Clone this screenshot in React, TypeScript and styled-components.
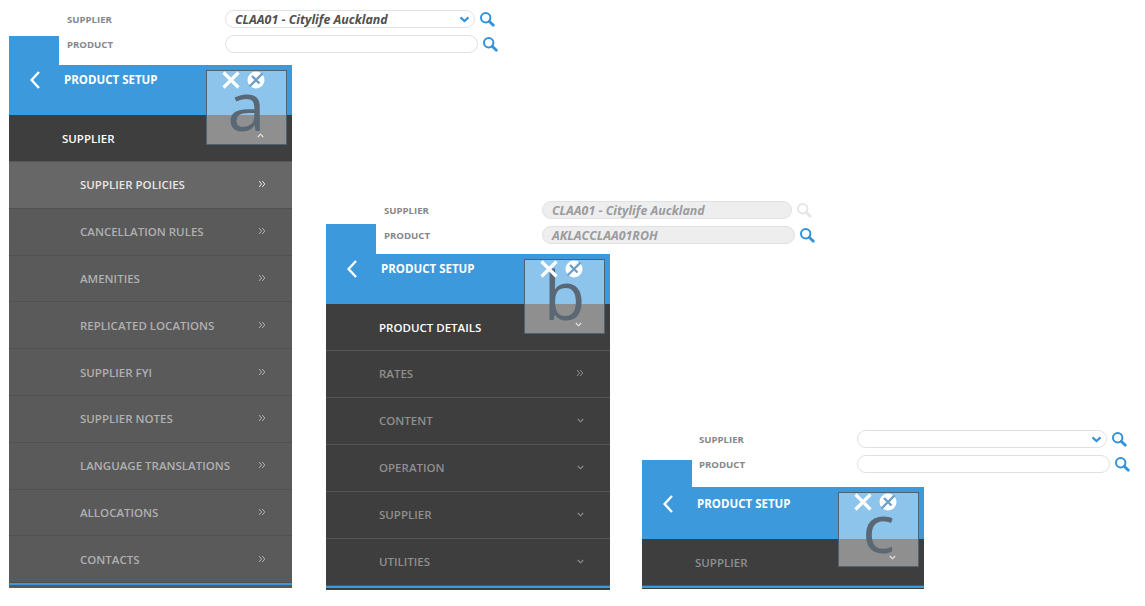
import styled, { createGlobalStyle } from "styled-components";

const GlobalStyle = createGlobalStyle`
  html, body {
    margin: 0;
    padding: 0;
    background: #fff;
  }
  body {
    font-family: "Open Sans", "Noto Sans", sans-serif;
    overflow: hidden;
  }
`;

const Page = styled.div`
  display: flex;
  align-items: flex-start;
  width: 1145px;
  height: 606px;
  overflow: hidden;
`;

const Column = styled.section<{ $top: number; $left: number; $width: number }>`
  flex: none;
  width: ${(p) => p.$width}px;
  margin-top: ${(p) => p.$top}px;
  margin-left: ${(p) => p.$left}px;
`;

const TopBar = styled.div<{ $height: number }>`
  display: flex;
  align-items: flex-start;
  height: ${(p) => p.$height}px;
`;

const Tab = styled.div<{ $height: number }>`
  flex: none;
  align-self: flex-end;
  width: 50px;
  height: ${(p) => p.$height}px;
  background: #3c99dc;
`;

const Form = styled.div<{ $indent: number }>`
  display: flex;
  flex-direction: column;
  gap: 7px;
  padding-left: ${(p) => p.$indent}px;
`;

const FormRow = styled.div`
  display: flex;
  align-items: center;
  height: 18px;
`;

const Label = styled.label`
  width: 158px;
  flex: none;
  padding-top: 1px;
  font-size: 9.6px;
  font-weight: 700;
  color: #85878a;
`;

const Field = styled.div<{ $width: number; $disabled?: boolean }>`
  box-sizing: border-box;
  display: flex;
  align-items: center;
  flex: none;
  width: ${(p) => p.$width}px;
  height: 18px;
  padding: 0 4px 0 9px;
  border: 1px solid #e1e1e1;
  border-radius: 9px;
  background: ${(p) => (p.$disabled ? "#eeeeee" : "#fff")};
  color: ${(p) => (p.$disabled ? "#9a9c9e" : "#505050")};
  font-size: 12.4px;
  font-weight: 700;
  font-style: italic;
  white-space: nowrap;
`;

const Caret = styled.svg`
  display: block;
  flex: none;
  margin-left: auto;
`;

const SearchButton = styled.span<{ $muted?: boolean }>`
  display: flex;
  margin-left: 4px;
  color: ${(p) => (p.$muted ? "#e6e6e6" : "#3492d8")};
`;

const Panel = styled.div`
  position: relative;
`;

const Header = styled.header<{ $height: number }>`
  display: flex;
  align-items: flex-start;
  height: ${(p) => p.$height}px;
  padding-top: ${(p) => p.$height - 45}px;
  box-sizing: border-box;
  background: #3c99dc;
  color: #fff;
`;

const Back = styled.span`
  display: flex;
  box-sizing: border-box;
  width: 55px;
  padding-left: 20px;
`;

const Title = styled.h1`
  margin: 0;
  font-size: 11.5px;
  line-height: 20px;
  font-weight: 700;
`;

const Section = styled.div<{ $active?: boolean }>`
  box-sizing: border-box;
  display: flex;
  align-items: center;
  justify-content: space-between;
  height: 47px;
  padding: 0 26px 1px 53px;
  background: #3e3e3e;
  border-bottom: 1px solid #565656;
  color: ${(p) => (p.$active ? "#fff" : "#8f8f8f")};
  font-size: 11.5px;
  font-weight: 600;

  header + & {
    padding-bottom: 0;
  }
`;

const Item = styled.div<{ $selected?: boolean }>`
  box-sizing: border-box;
  display: flex;
  align-items: center;
  justify-content: space-between;
  height: 46.8px;
  padding: 0 26px 0 71px;
  background: ${(p) => (p.$selected ? "#676767" : "#5a5a5a")};
  border-bottom: 1px solid #505050;
  color: ${(p) => (p.$selected ? "#e6e6e6" : "#b0b0b0")};
  font-size: 11.5px;
  font-weight: 600;
`;

const Footer = styled.div<{ $bg: string; $height: number }>`
  height: ${(p) => p.$height}px;
  border-top: 2px solid #3c99dc;
  box-sizing: border-box;
  background: ${(p) => p.$bg};
`;

const Callout = styled.div`
  position: absolute;
  top: 5px;
  right: 5px;
  box-sizing: border-box;
  width: 81px;
  height: 75px;
  border: 1px solid #4d6273;
  background: rgba(255, 255, 255, 0.42);
`;

const CalloutIcons = styled.div`
  display: flex;
  gap: 7px;
  padding-left: 15px;
`;

const CalloutLetter = styled.div`
  position: absolute;
  left: 0;
  right: 0;
  top: -1px;
  text-align: center;
  font-size: 68px;
  line-height: 70px;
  color: #5a6774;
`;

const CalloutChevron = styled.span`
  position: absolute;
  left: 50px;
  bottom: 5px;
  display: flex;
  color: #e8e8e8;
`;

const Icon = styled.svg`
  display: block;
  flex: none;
  position: relative;
`;

const RowChevron = styled(Icon)`
  margin-bottom: 1px;
`;

function SearchIcon() {
  return (
    <Icon width="16" height="16" viewBox="0 0 16 16" fill="none" stroke="currentColor">
      <circle cx="6.7" cy="6.7" r="4.7" strokeWidth="2" />
      <path d="M10.2 10.2 14.3 14.3" strokeWidth="2.8" strokeLinecap="round" />
    </Icon>
  );
}

function SelectCaret() {
  return (
    <Caret width="11" height="7" viewBox="0 0 11 7" fill="none" stroke="#3492d8">
      <path d="M1.5 1.4 5.5 5 9.5 1.4" strokeWidth="2.2" />
    </Caret>
  );
}

function DoubleChevron() {
  return (
    <RowChevron width="8" height="8" viewBox="0 0 8 8" fill="none" stroke="currentColor">
      <path d="M1 1 3.6 4 1 7M4.2 1 6.8 4 4.2 7" strokeWidth="1" />
    </RowChevron>
  );
}

function SmallChevron({ up }: { up?: boolean }) {
  return (
    <RowChevron width="7" height="5" viewBox="0 0 7 5" fill="none" stroke="currentColor">
      <path d={up ? "M.8 4 3.5 1.2 6.2 4" : "M.8 1 3.5 3.8 6.2 1"} strokeWidth="1.1" />
    </RowChevron>
  );
}

function BackIcon() {
  return (
    <Icon width="12" height="20" viewBox="0 0 12 20" fill="none" stroke="#fff">
      <path d="M10 2 2.6 10 10 18" strokeWidth="2.4" />
    </Icon>
  );
}

function CloseIcon() {
  return (
    <Icon width="18" height="18" viewBox="0 0 18 18" fill="none" stroke="#fff">
      <path d="M1.5 1.5 16.5 16.5M16.5 1.5 1.5 16.5" strokeWidth="3.2" />
    </Icon>
  );
}

function UnpinIcon() {
  return (
    <Icon width="18" height="18" viewBox="0 0 18 18">
      <circle cx="9" cy="9" r="8.5" fill="#fff" />
      <path d="M5 5 12.5 12.5M15.5 2.5 2.5 15.5" stroke="#6f9fc8" strokeWidth="2.4" />
    </Icon>
  );
}

type Row = { label: string; double?: boolean };

const supplierItems = [
  "SUPPLIER POLICIES",
  "CANCELLATION RULES",
  "AMENITIES",
  "REPLICATED LOCATIONS",
  "SUPPLIER FYI",
  "SUPPLIER NOTES",
  "LANGUAGE TRANSLATIONS",
  "ALLOCATIONS",
  "CONTACTS",
];

const productRows: Row[] = [
  { label: "RATES", double: true },
  { label: "CONTENT" },
  { label: "OPERATION" },
  { label: "SUPPLIER" },
  { label: "UTILITIES" },
];

function Marker({ letter, up }: { letter: string; up?: boolean }) {
  return (
    <Callout>
      <CalloutLetter>{letter}</CalloutLetter>
      <CalloutIcons>
        <CloseIcon />
        <UnpinIcon />
      </CalloutIcons>
      <CalloutChevron>
        <SmallChevron up={up} />
      </CalloutChevron>
    </Callout>
  );
}

function ProductForm({
  indent,
  supplier,
  product,
  disabled,
  select,
}: {
  indent: number;
  supplier?: string;
  product?: string;
  disabled?: boolean;
  select?: boolean;
}) {
  return (
    <Form $indent={indent}>
      <FormRow>
        <Label>SUPPLIER</Label>
        <Field $width={250} $disabled={disabled}>
          {supplier}
          {select && <SelectCaret />}
        </Field>
        <SearchButton $muted={disabled}>
          <SearchIcon />
        </SearchButton>
      </FormRow>
      <FormRow>
        <Label>PRODUCT</Label>
        <Field $width={253} $disabled={disabled}>
          {product}
        </Field>
        <SearchButton>
          <SearchIcon />
        </SearchButton>
      </FormRow>
    </Form>
  );
}

function PanelHeader({ height }: { height: number }) {
  return (
    <Header $height={height}>
      <Back>
        <BackIcon />
      </Back>
      <Title>PRODUCT SETUP</Title>
    </Header>
  );
}

export default function App() {
  return (
    <Page>
      <GlobalStyle />
      <Column $top={10} $left={9} $width={283}>
        <TopBar $height={55}>
          <Tab $height={29} />
          <ProductForm indent={8} supplier="CLAA01 - Citylife Auckland" select />
        </TopBar>
        <Panel>
          <PanelHeader height={50} />
          <Section $active>SUPPLIER</Section>
          {supplierItems.map((item, i) => (
            <Item key={item} $selected={i === 0}>
              {item}
              <DoubleChevron />
            </Item>
          ))}
          <Footer $bg="#5a5a5a" $height={5} />
          <Marker letter="a" up />
        </Panel>
      </Column>
      <Column $top={201} $left={34} $width={284}>
        <TopBar $height={53}>
          <Tab $height={30} />
          <ProductForm
            indent={8}
            supplier="CLAA01 - Citylife Auckland"
            product="AKLACCLAA01ROH"
            disabled
          />
        </TopBar>
        <Panel>
          <PanelHeader height={50} />
          <Section $active>PRODUCT DETAILS</Section>
          {productRows.map((row) => (
            <Section key={row.label}>
              {row.label}
              {row.double ? <DoubleChevron /> : <SmallChevron />}
            </Section>
          ))}
          <Footer $bg="#3e3e3e" $height={4} />
          <Marker letter="b" />
        </Panel>
      </Column>
      <Column $top={430} $left={32} $width={282}>
        <TopBar $height={57}>
          <Tab $height={27} />
          <ProductForm indent={7} select />
        </TopBar>
        <Panel>
          <PanelHeader height={52} />
          <Section>SUPPLIER</Section>
          <Footer $bg="#3e3e3e" $height={3} />
          <Marker letter="c" />
        </Panel>
      </Column>
    </Page>
  );
}
